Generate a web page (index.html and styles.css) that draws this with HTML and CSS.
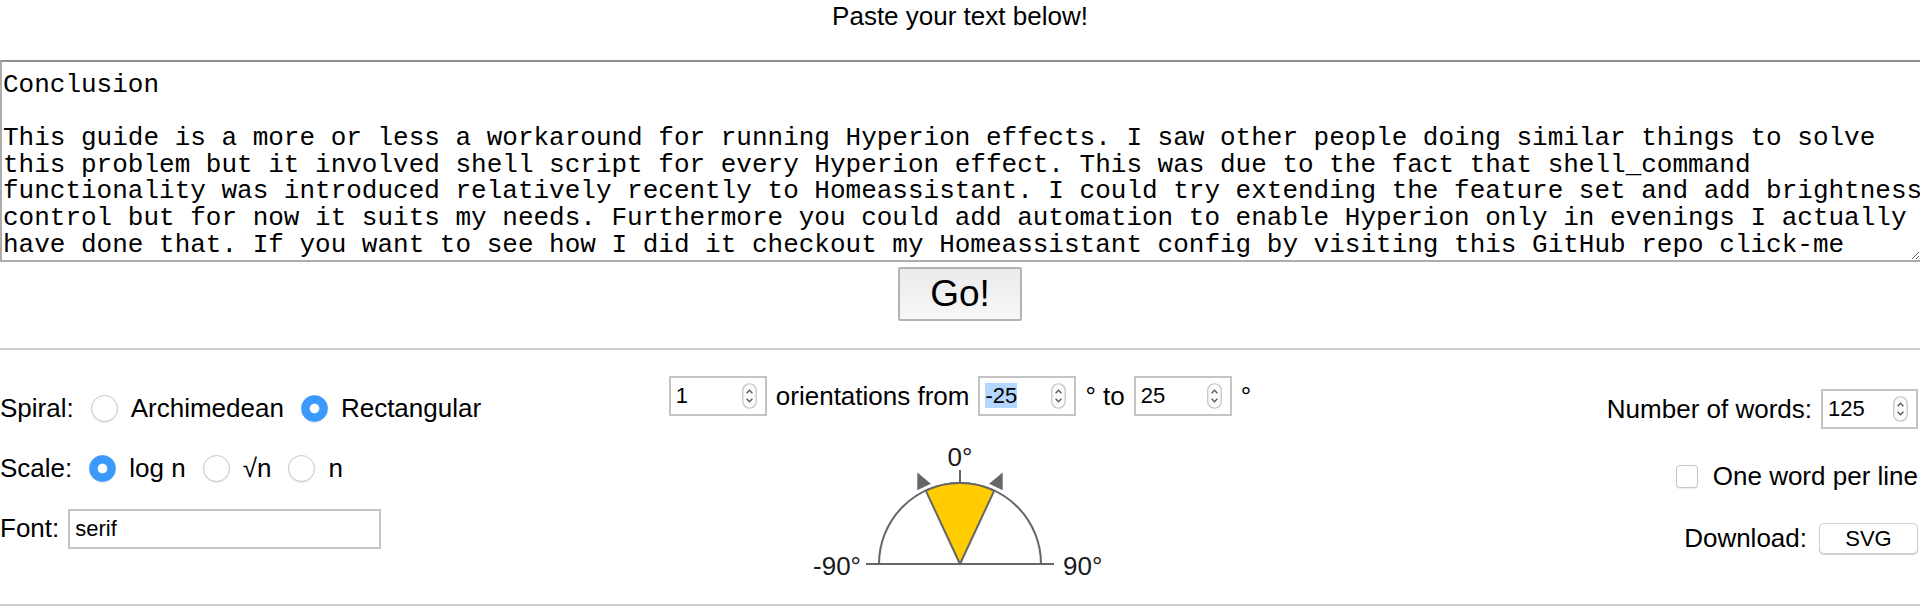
FILE: index.html
```html
<!DOCTYPE html>
<html lang="en">
<head>
<meta charset="utf-8">
<title>Word Cloud</title>
<link rel="stylesheet" href="styles.css">
</head>
<body>
<div class="header">Paste your text below!</div>
<textarea class="source" wrap="off" spellcheck="false">Conclusion

This guide is a more or less a workaround for running Hyperion effects. I saw other people doing similar things to solve
this problem but it involved shell script for every Hyperion effect. This was due to the fact that shell_command
functionality was introduced relatively recently to Homeassistant. I could try extending the feature set and add brightness
control but for now it suits my needs. Furthermore you could add automation to enable Hyperion only in evenings I actually
have done that. If you want to see how I did it checkout my Homeassistant config by visiting this GitHub repo click-me</textarea>
<div class="go-row"><button class="go">Go!</button></div>
<hr class="rule">
<div class="controls">
  <div class="left">
    <div class="lrow">
      <span>Spiral:</span>
      <input type="radio" class="radio" name="spiral">
      <span>Archimedean</span>
      <input type="radio" class="radio on" name="spiral" checked>
      <span>Rectangular</span>
    </div>
    <div class="lrow">
      <span>Scale:</span>
      <input type="radio" class="radio on" name="scale" checked>
      <span>log n</span>
      <input type="radio" class="radio" name="scale">
      <span>√n</span>
      <input type="radio" class="radio" name="scale">
      <span>n</span>
    </div>
    <div class="lrow last">
      <span>Font:</span>
      <input type="text" class="font-in" value="serif">
    </div>
  </div>

  <div class="center">
    <div class="orow">
      <div class="num"><span class="val">1</span><svg class="spin" width="15" height="26" viewBox="0 0 15 26"><rect x="0.75" y="0.75" width="13.5" height="24.5" rx="6.75" fill="#fbfbfb" stroke="#c2c2c2" stroke-width="1.2"/><polyline points="4.6,10.2 7.5,7.2 10.4,10.2" fill="none" stroke="#5a5a5a" stroke-width="1.3"/><polyline points="4.6,15.8 7.5,18.8 10.4,15.8" fill="none" stroke="#5a5a5a" stroke-width="1.3"/></svg></div>
      <span>orientations from</span>
      <div class="num"><span class="val"><span class="sel">-25</span></span><svg class="spin" width="15" height="26" viewBox="0 0 15 26"><rect x="0.75" y="0.75" width="13.5" height="24.5" rx="6.75" fill="#fbfbfb" stroke="#c2c2c2" stroke-width="1.2"/><polyline points="4.6,10.2 7.5,7.2 10.4,10.2" fill="none" stroke="#5a5a5a" stroke-width="1.3"/><polyline points="4.6,15.8 7.5,18.8 10.4,15.8" fill="none" stroke="#5a5a5a" stroke-width="1.3"/></svg></div>
      <span>° to</span>
      <div class="num"><span class="val">25</span><svg class="spin" width="15" height="26" viewBox="0 0 15 26"><rect x="0.75" y="0.75" width="13.5" height="24.5" rx="6.75" fill="#fbfbfb" stroke="#c2c2c2" stroke-width="1.2"/><polyline points="4.6,10.2 7.5,7.2 10.4,10.2" fill="none" stroke="#5a5a5a" stroke-width="1.3"/><polyline points="4.6,15.8 7.5,18.8 10.4,15.8" fill="none" stroke="#5a5a5a" stroke-width="1.3"/></svg></div>
      <span>°</span>
    </div>
    <svg class="dial" width="320" height="150" viewBox="0 0 320 150">
      <line x1="66" y1="124" x2="254" y2="124" stroke="#666" stroke-width="2"/>
      <path d="M79,124 A81,81 0 0,1 241,124" fill="none" stroke="#666" stroke-width="2"/>
      <line x1="160" y1="30" x2="160" y2="44" stroke="#666" stroke-width="2"/>
      <path d="M160,124 L125.77,50.59 A81,81 0 0,1 194.23,50.59 Z" fill="#ffcc00" stroke="#666" stroke-width="2" stroke-linejoin="round"/>
      <g transform="translate(160,124) rotate(-25)"><polygon points="0,-101 -7.5,-85 7.5,-85" fill="#666"/></g>
      <g transform="translate(160,124) rotate(25)"><polygon points="0,-101 -7.5,-85 7.5,-85" fill="#666"/></g>
      <text x="160" y="26" text-anchor="middle" class="dial-lab">0°</text>
      <text x="61" y="135" text-anchor="end" class="dial-lab">-90°</text>
      <text x="263" y="135" text-anchor="start" class="dial-lab">90°</text>
    </svg>
  </div>

  <div class="right">
    <div class="rrow r1">
      <span>Number of words:</span>
      <div class="num words"><span class="val">125</span><svg class="spin" width="15" height="26" viewBox="0 0 15 26"><rect x="0.75" y="0.75" width="13.5" height="24.5" rx="6.75" fill="#fbfbfb" stroke="#c2c2c2" stroke-width="1.2"/><polyline points="4.6,10.2 7.5,7.2 10.4,10.2" fill="none" stroke="#5a5a5a" stroke-width="1.3"/><polyline points="4.6,15.8 7.5,18.8 10.4,15.8" fill="none" stroke="#5a5a5a" stroke-width="1.3"/></svg></div>
    </div>
    <div class="rrow r2">
      <input type="checkbox" class="check">
      <span>One word per line</span>
    </div>
    <div class="rrow r3">
      <span>Download:</span>
      <button class="svg-btn">SVG</button>
    </div>
  </div>
</div>
<hr class="rule">
</body>
</html>
```

FILE: styles.css
```css
html, body {
  margin: 0;
  padding: 0;
}

body {
  width: 1920px;
  overflow: hidden;
  font-family: "Liberation Sans", Arial, sans-serif;
  font-size: 26px;
  color: #000;
  background: #fff;
}

.header {
  box-sizing: border-box;
  height: 60px;
  padding-top: 1px;
  line-height: 30px;
  text-align: center;
}

.source {
  display: block;
  box-sizing: border-box;
  width: 1922px;
  height: 202px;
  margin: 0;
  padding: 9.7px 0 0 1px;
  border: 2px solid #adadad;
  border-top-color: #8e8e8e;
  font-family: "Liberation Mono", "Courier New", monospace;
  font-size: 26px;
  line-height: 26.67px;
  color: #000;
  background: #fff;
  white-space: pre;
  overflow: hidden;
  resize: both;
  outline: none;
}

.go-row {
  display: flex;
  justify-content: center;
  padding: 5px 0 27px;
}

.go {
  box-sizing: border-box;
  width: 124px;
  height: 54px;
  padding: 0;
  font-family: "Liberation Sans", Arial, sans-serif;
  font-size: 37px;
  color: #000;
  border: 2px solid #b3b3b3;
  border-radius: 2px;
  background: linear-gradient(#ebebeb, #f7f7f7);
}

.rule {
  margin: 0;
  border: 0;
  height: 2px;
  background: #d2d2d2;
}

.controls {
  display: grid;
  grid-template-columns: 1fr auto 1fr;
  height: 254px;
}

/* left column */
.left {
  padding-top: 28px;
}

.lrow {
  display: flex;
  align-items: center;
  height: 60px;
  white-space: nowrap;
}

.lrow.last {
  height: 61px;
}

.radio {
  -webkit-appearance: none;
  appearance: none;
  box-sizing: border-box;
  flex: none;
  width: 27px;
  height: 27px;
  margin: 0 13px 0 17px;
  border-radius: 50%;
  border: 1.5px solid #c6c6c6;
  background: #fff;
  box-shadow: 0 1px 1px rgba(0, 0, 0, 0.08);
  outline: none;
}

.radio.on {
  border-color: #3b99fc;
  background: radial-gradient(circle, #fff 0 4.3px, #3b99fc 5.3px);
}

.font-in {
  box-sizing: border-box;
  width: 313px;
  height: 40px;
  margin: 0 0 0 9px;
  padding: 0 5px;
  border: 2px solid #c4c4c4;
  font-family: "Liberation Sans", Arial, sans-serif;
  font-size: 22px;
  color: #000;
  outline: none;
}

/* center column */
.center {
  padding-top: 26px;
  display: flex;
  flex-direction: column;
  align-items: center;
}

.orow {
  display: flex;
  align-items: center;
  gap: 9px;
  height: 40px;
  white-space: nowrap;
}

.num {
  box-sizing: border-box;
  width: 98px;
  height: 40px;
  display: flex;
  align-items: center;
  padding: 0 8px 0 5px;
  border: 2px solid #c4c4c4;
  font-size: 22px;
  background: #fff;
}

.num .val {
  flex: 1;
}

.sel {
  background: #b3d7fe;
}

.spin {
  display: block;
  flex: none;
}

.dial {
  display: block;
  margin-top: 24px;
}

.dial-lab {
  font-family: "Liberation Sans", Arial, sans-serif;
  font-size: 26px;
  fill: #1a1a1a;
}

/* right column */
.right {
  padding-top: 28px;
  padding-right: 2px;
}

.rrow {
  display: flex;
  align-items: center;
  justify-content: flex-end;
  white-space: nowrap;
}

.r1 {
  height: 62px;
}

.r2 {
  height: 73px;
}

.r3 {
  height: 51px;
}

.num.words {
  width: 97px;
  margin-left: 9px;
}

.check {
  -webkit-appearance: none;
  appearance: none;
  box-sizing: border-box;
  flex: none;
  width: 22px;
  height: 23px;
  margin: 0 15px 0 0;
  border: 1.5px solid #c6c6c6;
  border-radius: 4px;
  background: #fff;
  box-shadow: 0 1px 1px rgba(0, 0, 0, 0.08);
  outline: none;
}

.svg-btn {
  box-sizing: border-box;
  width: 99px;
  height: 31px;
  margin-left: 12px;
  padding: 0;
  border: 1px solid #d0d0d0;
  border-radius: 5px;
  background: #fff;
  box-shadow: 0 1px 1px rgba(0, 0, 0, 0.2);
  font-family: "Liberation Sans", Arial, sans-serif;
  font-size: 22px;
  color: #000;
}
```
